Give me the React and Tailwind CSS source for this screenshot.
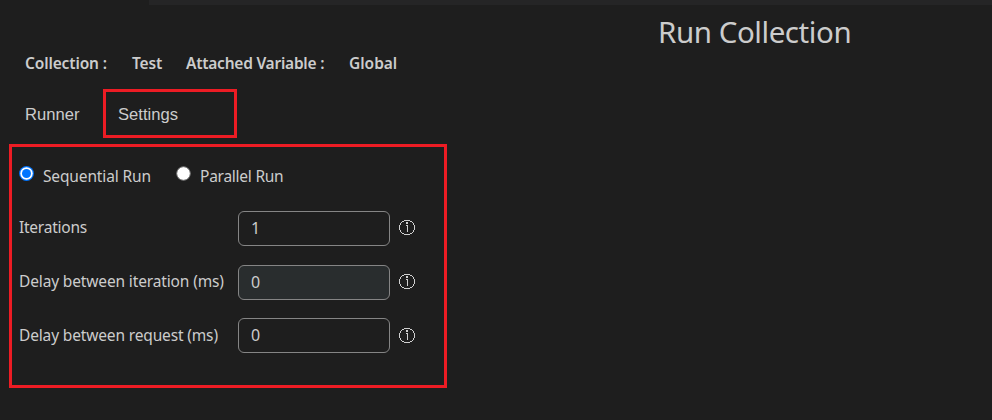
function InfoIcon({ iconClass }) {
  return (
    <svg className={`relative ml-[9px] h-[15px] w-4 shrink-0 ${iconClass}`} viewBox="0 0 16 15" fill="#cfcfcf" shapeRendering="crispEdges">
      <path d="M5 0h6v1H5zM3 1h2v1H3zM11 1h2v1h-2zM2 2h1v1H2zM13 2h1v1h-1zM1 3h1v2H1zM14 3h1v2h-1zM0 5h1v5H0zM15 5h1v5h-1zM1 10h1v2H1zM14 10h1v2h-1zM2 12h1v1H2zM13 12h1v1h-1zM3 13h2v1H3zM11 13h2v1h-2zM5 14h6v1H5z" />
      <path d="M7 2h2v2H7zM7 5h1v1H7zM8 5h1v7H8z" />
    </svg>
  );
}

function Radio({ checked }) {
  return (
    <svg className="size-[15px] shrink-0" viewBox="0 0 15 15">
      {checked ? (
        <>
          <circle cx="7.5" cy="7.5" r="7.4" fill="#0075ff" />
          <circle cx="7.5" cy="7.5" r="6.2" fill="#fff" />
          <circle cx="7.5" cy="7.5" r="4.5" fill="#0075ff" />
        </>
      ) : (
        <circle cx="7.5" cy="7.5" r="6.8" fill="#fff" stroke="#767676" />
      )}
    </svg>
  );
}

function Field({ label, labelClass, value, rowClass, boxClass, iconClass }) {
  return (
    <div className={`flex h-[35px] items-center ${rowClass}`}>
      <div className="w-[219px] shrink-0 whitespace-nowrap">
        <span className={`relative ${labelClass}`}>{label}</span>
      </div>
      <div className={`flex h-[35px] w-[152px] shrink-0 items-center rounded-md border border-[#858585] pl-3 text-base ${boxClass}`}>
        <span className="relative -top-px">{value}</span>
      </div>
      <InfoIcon iconClass={iconClass} />
    </div>
  );
}

export default function App() {
  return (
    <div className="h-[420px] w-[992px] overflow-hidden bg-[#1e1e1e] font-['Noto_Sans','Open_Sans',sans-serif] text-[15.5px] text-[#cccccc]">
      <div className="ml-[149px] h-[5px] bg-[#252526]" />
      <h1 className="ml-[658px] h-[48px] whitespace-nowrap pt-[3px] text-[29.5px] leading-[48px] tracking-[-0.44px]">
        Run Collection
      </h1>
      <div className="flex h-5 items-center pt-[2px] pl-[25px] font-semibold tracking-[-0.14px] whitespace-nowrap">
        <span className="w-[107px]">Collection :</span>
        <span className="w-[54px]">Test</span>
        <span className="w-[163px] tracking-[-0.24px]">Attached Variable :</span>
        <span className="tracking-[-0.02px]">Global</span>
      </div>
      <div className="mt-4 flex h-[49px] items-center pl-[25px] font-['Liberation_Sans',Arial,sans-serif] text-[16.6px]">
        <span className="w-[78px] pt-[3px]">Runner</span>
        <div className="flex h-[49px] w-[134px] items-center border-[3px] border-[#ed1c24] pt-[3px] pl-[12px]">Settings</div>
      </div>
      <div className="mt-[6px] ml-[9px] h-[244px] w-[438px] border-[3px] border-[#ed1c24] pl-[7px]">
        <div className="flex h-[64px] items-start pt-[19px] whitespace-nowrap">
          <Radio checked />
          <span className="ml-[9px] w-[133px] leading-[20px] tracking-[-0.14px]">Sequential Run</span>
          <Radio />
          <span className="ml-[9px] leading-[20px] tracking-[-0.25px]">Parallel Run</span>
        </div>
        <Field label="Iterations" labelClass="-top-px tracking-[-0.24px]" value="1" rowClass="" boxClass="" iconClass="-top-px" />
        <Field label="Delay between iteration (ms)" labelClass="-top-px tracking-[-0.14px]" value="0" rowClass="mt-[19px]" boxClass="bg-[#292d2e]" iconClass="-top-px" />
        <Field label="Delay between request (ms)" labelClass="top-0 tracking-[-0.15px]" value="0" rowClass="mt-[18px]" boxClass="" iconClass="top-0" />
      </div>
    </div>
  );
}
